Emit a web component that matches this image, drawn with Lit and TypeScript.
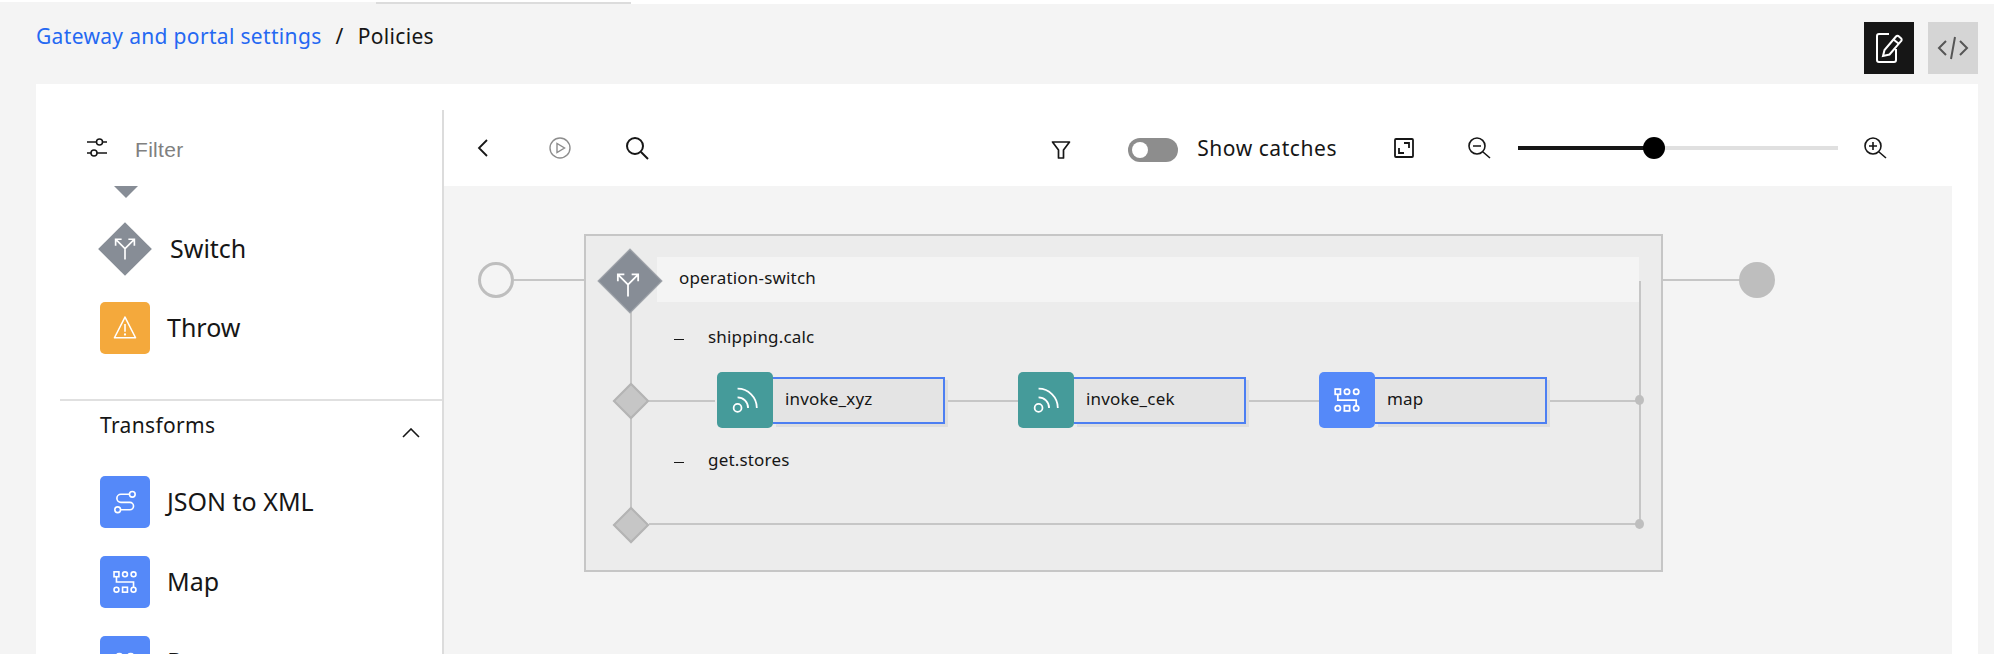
import { LitElement, html, css, svg } from "lit";
import { customElement } from "lit/decorators.js";

const icons: Record<string, unknown> = {
  split: svg`<path d="M16 30V15.5L4 3.5M16 15.5 28 3.5M3.5 11.5V3h8M28.5 11.5V3h-8" fill="none" stroke="#fff" stroke-width="2.2"/>`,
  warn: svg`<path d="M16 2.5 3 28h26Z" fill="none" stroke="#fff" stroke-width="1.9" stroke-linejoin="round"/><path d="M16 11v9.5" stroke="#fff" stroke-width="2"/><circle cx="16" cy="24" r="1.4" fill="#fff"/>`,
  route: svg`<circle cx="25" cy="6.5" r="3.5" fill="none" stroke="#fff" stroke-width="2"/><circle cx="7" cy="25.5" r="3.5" fill="none" stroke="#fff" stroke-width="2"/><path d="M21.5 6.5H11a5 5 0 0 0 0 10h11a4.5 4.5 0 0 1 0 9H10.5" fill="none" stroke="#fff" stroke-width="2"/>`,
  map: svg`<g fill="none" stroke="#fff" stroke-width="2"><rect x="2.5" y="3.5" width="6" height="6"/><circle cx="16" cy="6.5" r="3"/><circle cx="26.5" cy="6.5" r="3"/><circle cx="5.5" cy="25.5" r="3"/><rect x="13" y="22.5" width="6" height="6"/><circle cx="26.5" cy="25.5" r="3"/><path d="M5.5 9.5V16h21v6.5"/></g>`,
  rss: svg`<g fill="none" stroke="#fff" stroke-width="2"><circle cx="7.5" cy="25" r="4.5"/><path d="M7.5 13A12 12 0 0 1 19.5 25M7.5 3A22 22 0 0 1 29.5 25"/></g>`,
  parse: svg`<g fill="none" stroke="#fff" stroke-width="2"><circle cx="9" cy="9" r="3.5"/><circle cx="23" cy="9" r="3.5"/></g>`,
};

@customElement("app-root")
export class AppRoot extends LitElement {
  static styles = css`
    :host { display: block; width: 1994px; height: 654px; overflow: hidden; background: #fff; font-family: "Noto Sans", "Open Sans", sans-serif; color: #161616; }
    svg { display: block; flex: none; }
    .strip { height: 4px; background: #fff; display: flex; align-items: flex-end; }
    .strip i { display: block; height: 2px; }
    .strip .a { width: 376px; background: #f4f4f4; }
    .strip .b { width: 255px; background: #dcdcdc; }
    .page { height: 650px; background: #f4f4f4; padding: 0 16px 0 36px; display: flex; flex-direction: column; box-sizing: border-box; overflow: hidden; }
    .head { height: 80px; flex: none; display: flex; justify-content: space-between; box-sizing: border-box; }
    .crumbs { display: flex; align-items: center; height: 24px; margin-top: 20px; font-size: 21px; gap: 14px; letter-spacing: .33px; }
    .crumbs a { color: #2468f2; }
    .acts { display: flex; gap: 14px; padding-top: 18px; }
    .act { width: 50px; height: 52px; display: flex; align-items: center; justify-content: center; background: #d5d5d5; }
    .act.on { background: #161616; }
    .card { flex: 1; background: #fff; display: flex; padding-top: 26px; min-height: 0; }
    .side { width: 408px; flex: none; border-right: 2px solid #dcdcdc; box-sizing: border-box; display: flex; flex-direction: column; overflow: hidden; }
    .filter { display: flex; align-items: center; height: 50px; padding: 15px 0 0 51px; gap: 28px; flex: none; }
    .filter svg { margin-top: -4px; }
    .filter span { font-family: "Liberation Sans", sans-serif; font-size: 21px; color: #808080; letter-spacing: .3px; }
    .tri { width: 0; height: 0; border-left: 12px solid transparent; border-right: 12px solid transparent; border-top: 12px solid #878d96; margin: 11px 0 0 78px; flex: none; }
    .items { padding-left: 64px; display: flex; flex-direction: column; flex: none; }
    .item { display: flex; align-items: center; height: 52px; gap: 17px; font-size: 25px; margin-bottom: 28px; }
    .item span { margin-top: -3px; }
    .box { width: 50px; height: 52px; border-radius: 5px; display: flex; align-items: center; justify-content: center; flex: none; }
    .orange { background: #f4a93c; }
    .blue { background: #5589f9; }
    .teal { background: #459b9a; }
    .swi { height: 54px; margin: 24px 0 26px 0; gap: 18px; padding-left: 1px; }
    .dia { width: 54px; height: 54px; flex: none; margin-left: -3px; position: relative; display: flex; align-items: center; justify-content: center; }
    .dia::before { content: ""; position: absolute; inset: 8px; background: #878d96; transform: rotate(45deg); }
    .dia svg { position: relative; }
    .sect { margin: 17px 0 0 24px; border-top: 2px solid #e0e0e0; padding: 0 22px 0 40px; height: 52px; box-sizing: border-box; display: flex; justify-content: space-between; align-items: center; font-size: 21px; flex: none; letter-spacing: .35px; }
    .sect span { margin-top: -3px; }
    .sect svg { margin-top: 14px; }
    .sect + .items { margin-top: 25px; }
    .main { flex: 1; display: flex; flex-direction: column; min-width: 0; }
    .bar { height: 76px; flex: none; display: flex; align-items: center; padding-right: 91px; box-sizing: border-box; }
    .bar .l { display: flex; align-items: center; }
    .bar .r { margin-left: auto; display: flex; align-items: center; }
    .funnel { margin-top: 4px; }
    .tog { width: 50px; height: 24px; border-radius: 12px; background: #8d8d8d; display: flex; align-items: center; padding-left: 4px; box-sizing: border-box; margin: 4px 0 0 57px; flex: none; }
    .tog i { display: block; width: 16px; height: 16px; border-radius: 50%; background: #fff; }
    .lbl { font-size: 21px; margin: 0 0 0 19px; letter-spacing: .55px; white-space: nowrap; }
    .slider { width: 320px; height: 4px; background: #e0e0e0; position: relative; margin: 0 26px 0 27px; flex: none; }
    .slider b { display: block; width: 136px; height: 4px; background: #161616; }
    .slider i { position: absolute; left: 125px; top: -9px; width: 22px; height: 22px; border-radius: 50%; background: #000; }
    .canvas { flex: 1; background: #f4f4f4; margin-right: 26px; position: relative; font-size: 17px; letter-spacing: .18px; overflow: hidden; }
    .canvas > * { position: absolute; }
    .ln { background: #c6c6c6; }
    .start { left: 34px; top: 76px; width: 36px; height: 36px; box-sizing: border-box; border: 3px solid #bebebe; border-radius: 50%; }
    .end { left: 1295px; top: 76px; width: 36px; height: 36px; border-radius: 50%; background: #bebebe; }
    .group { left: 140px; top: 48px; width: 1079px; height: 338px; box-sizing: border-box; background: #ececec; border: 2px solid #c6c6c6; }
    .title { left: 213px; top: 71px; width: 982px; height: 45px; background: #f4f4f4; display: flex; align-items: center; padding: 0 0 4px 22px; box-sizing: border-box; }
    .sw { left: 163px; top: 72px; width: 46px; height: 46px; background: #878d96; border: 1px solid #a4a8ae; box-sizing: border-box; transform: rotate(45deg); }
    .swi2 { left: 171px; top: 86px; }
    .small { width: 26px; height: 26px; background: #c6c6c6; border: 2px solid #b4b4b4; box-sizing: border-box; transform: rotate(45deg); left: 174px; }
    .dot { width: 9px; height: 10px; border-radius: 50%; background: #bebebe; left: 1191px; }
    .case { left: 230px; display: flex; align-items: center; height: 24px; gap: 24px; }
    .case i { display: block; width: 10px; height: 1.5px; background: #161616; margin-top: 7px; }
    .node { display: flex; align-items: center; height: 56px; top: 186px; }
    .node .box { width: 56px; height: 56px; border-radius: 5px; }
    .node .tx { width: 172px; height: 47px; box-sizing: border-box; border: 2px solid #4d7ff2; border-left: 0; background: #e4e4e4; box-shadow: 3px 3px 0 #dedede; padding: 0 0 3px 12px; display: flex; align-items: center; }
  `;

  private ic(n: string, s = 26) {
    return html`<svg width=${s} height=${s} viewBox="0 0 32 32">${icons[n]}</svg>`;
  }

  private hline(x: number, y: number, w: number) {
    return html`<div class="ln" style="left:${x}px;top:${y}px;width:${w}px;height:2px"></div>`;
  }
  private vline(x: number, y: number, h: number) {
    return html`<div class="ln" style="left:${x}px;top:${y}px;width:2px;height:${h}px"></div>`;
  }

  private node(x: number, cls: string, icon: string, label: string) {
    return html`<div class="node" style="left:${x}px"><div class="box ${cls}">${this.ic(icon, 28)}</div><div class="tx">${label}</div></div>`;
  }

  render() {
    return html`
      <div class="strip"><i class="a"></i><i class="b"></i></div>
      <div class="page">
        <div class="head">
          <div class="crumbs"><a>Gateway and portal settings</a><span>/</span><span>Policies</span></div>
          <div class="acts">
            <div class="act on"><svg width="28" height="32" viewBox="0 0 28 32" fill="none" stroke="#fff" stroke-width="2"><path d="M14 2H4a2 2 0 0 0-2 2v24a2 2 0 0 0 2 2h15a2 2 0 0 0 2-2V17"/><path d="M8 24l1.5-6L21 4.5a2 2 0 0 1 3 0l2 1.7a2 2 0 0 1 0 3L14.5 22.5Z"/><path d="M18.5 7.5l5 4"/></svg></div>
            <div class="act"><svg width="32" height="24" viewBox="0 0 32 24" fill="none" stroke="#565656" stroke-width="2"><path d="M9 5 2 12l7 7M23 5l7 7-7 7M18 1l-4 22"/></svg></div>
          </div>
        </div>
        <div class="card">
          <div class="side">
            <div class="filter">
              <svg width="20" height="20" viewBox="0 0 20 20" fill="none" stroke="#161616" stroke-width="1.5"><path d="M0 4h9.5M15.5 4H20M0 15h4M10 15h10"/><circle cx="12.5" cy="4" r="3"/><circle cx="7" cy="15" r="3"/></svg>
              <span>Filter</span>
            </div>
            <div class="tri"></div>
            <div class="items">
              <div class="item swi"><div class="dia">${this.ic("split", 24)}</div><span>Switch</span></div>
              <div class="item"><div class="box orange">${this.ic("warn", 26)}</div><span>Throw</span></div>
            </div>
            <div class="sect"><span>Transforms</span><svg width="18" height="10" viewBox="0 0 18 10" fill="none" stroke="#161616" stroke-width="1.6"><path d="M1 9l8-8 8 8"/></svg></div>
            <div class="items">
              <div class="item"><div class="box blue">${this.ic("route", 26)}</div><span>JSON to XML</span></div>
              <div class="item"><div class="box blue">${this.ic("map", 26)}</div><span>Map</span></div>
              <div class="item"><div class="box blue">${this.ic("parse", 26)}</div><span>Parse</span></div>
            </div>
          </div>
          <div class="main">
            <div class="bar">
              <div class="l">
                <svg style="margin-left:33px" width="12" height="18" viewBox="0 0 12 18" fill="none" stroke="#161616" stroke-width="1.8"><path d="M10 1 2 9l8 8"/></svg>
                <svg style="margin-left:60px" width="22" height="22" viewBox="0 0 22 22" fill="none" stroke="#8d8d8d" stroke-width="1.4"><circle cx="11" cy="11" r="10"/><path d="M8 6.5v9l7.5-4.5Z"/></svg>
                <svg style="margin-left:54px" width="24" height="24" viewBox="0 0 24 24" fill="none" stroke="#161616" stroke-width="2"><circle cx="10" cy="10" r="8"/><path d="M16 16l7 7"/></svg>
              </div>
              <div class="r">
                <svg class="funnel" width="20" height="20" viewBox="0 0 20 20" fill="none" stroke="#161616" stroke-width="1.7" stroke-linejoin="round"><path d="M1.5 2h17l-6 8v8h-5v-8Z"/></svg>
                <div class="tog"><i></i></div>
                <span class="lbl">Show catches</span>
                <svg style="margin-left:57px" width="20" height="20" viewBox="0 0 20 20" fill="none" stroke="#161616" stroke-width="1.8"><rect x="1" y="1" width="18" height="18" rx="1"/><path d="M10 5h5v5M10 15H5v-5"/></svg>
                <svg style="margin-left:54px" width="23" height="22" viewBox="0 0 23 22" fill="none" stroke="#161616" stroke-width="1.6"><circle cx="9" cy="9" r="8"/><path d="M15 15l7 6M5 9h8"/></svg>
                <div class="slider"><b></b><i></i></div>
                <svg width="23" height="22" viewBox="0 0 23 22" fill="none" stroke="#161616" stroke-width="1.6"><circle cx="9" cy="9" r="8"/><path d="M15 15l7 6M5 9h8M9 5v8"/></svg>
              </div>
            </div>
            <div class="canvas">
              ${this.hline(70, 93, 70)}
              ${this.hline(1219, 93, 78)}
              <div class="start"></div>
              <div class="end"></div>
              <div class="group"></div>
              <div class="title">operation-switch</div>
              ${this.vline(186, 110, 226)}
              ${this.vline(1195, 95, 244)}
              ${this.hline(205, 214, 66)}
              ${this.hline(501, 214, 73)}
              ${this.hline(802, 214, 73)}
              ${this.hline(1103, 214, 92)}
              ${this.hline(205, 337, 990)}
              <div class="sw"></div>
              <div class="swi2">${this.ic("split", 26)}</div>
              <div class="small" style="top:202px"></div>
              <div class="small" style="top:326px"></div>
              <div class="dot" style="top:209px"></div>
              <div class="dot" style="top:333px"></div>
              <div class="case" style="top:138px"><i></i>shipping.calc</div>
              <div class="case" style="top:261px"><i></i>get.stores</div>
              ${this.node(273, "teal", "rss", "invoke_xyz")}
              ${this.node(574, "teal", "rss", "invoke_cek")}
              ${this.node(875, "blue", "map", "map")}
            </div>
          </div>
        </div>
      </div>
    `;
  }
}
